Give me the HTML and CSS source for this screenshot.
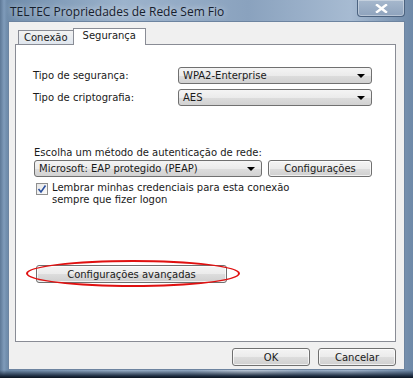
FILE: index.html
```html
<!DOCTYPE html>
<html lang="pt">
<head>
    <meta charset="UTF-8">
    <title>TELTEC Propriedades de Rede Sem Fio</title>
    <link rel="stylesheet" href="styles.css">
</head>
<body>
    <div class="window">
        <!-- Title bar -->
        <div class="titlebar">
            <span class="title">TELTEC Propriedades de Rede Sem Fio</span>
            <span class="close-btn">
                <svg width="13" height="9" viewBox="0 0 13 9">
                    <path d="M2 1 L11 8 M11 1 L2 8" stroke="#fff" stroke-width="2.4" stroke-linecap="square"/>
                </svg>
            </span>
        </div>

        <div class="client">
            <!-- Tabs -->
            <div class="tabs">
                <span class="tab">Conexão</span>
                <span class="tab tab-active">Segurança</span>
            </div>

            <div class="panel">
                <div class="field-row">
                    <span class="field-label">Tipo de segurança:</span>
                    <span class="select select-wide">WPA2-Enterprise<span class="arrow"></span></span>
                </div>
                <div class="field-row">
                    <span class="field-label">Tipo de criptografia:</span>
                    <span class="select select-wide">AES<span class="arrow"></span></span>
                </div>

                <div class="auth-label">Escolha um método de autenticação de rede:</div>
                <div class="auth-row">
                    <span class="select select-auth">Microsoft: EAP protegido (PEAP)<span class="arrow"></span></span>
                    <span class="btn btn-config">Configurações</span>
                </div>

                <div class="check-row">
                    <span class="checkbox">
                        <svg width="10" height="10" viewBox="0 0 10 10">
                            <path d="M1.5 5 L4 8 L8.5 1.5" stroke="#2a4f9e" stroke-width="1.6" fill="none"/>
                        </svg>
                    </span>
                    <span class="check-text">Lembrar minhas credenciais para esta conexão<br>sempre que fizer logon</span>
                </div>

                <div class="advanced">
                    <span class="btn btn-advanced">Configurações avançadas</span>
                </div>
            </div>

            <!-- Dialog buttons -->
            <div class="footer">
                <span class="btn btn-dialog">OK</span>
                <span class="btn btn-dialog">Cancelar</span>
            </div>
        </div>
    </div>
</body>
</html>
```

FILE: styles.css
```css
body {
    margin: 0;
    font-family: 'DejaVu Sans', 'Noto Sans', sans-serif;
    font-size: 10px;
    color: #1a1a1a;
}

.window {
    width: 413px;
    height: 378px;
    box-sizing: border-box;
    padding: 0 8px 8px 8px;
    display: flex;
    flex-direction: column;
    background:
        linear-gradient(to bottom, transparent 0, transparent 370px, #1d2c40 376px, #0b1420 378px),
        radial-gradient(ellipse 60px 30px at 60% 100%, rgba(255, 255, 255, 0.6), transparent),
        linear-gradient(to right, #5d7896 0, #7f9bba 4px, #6f8cab 7px, #9cb3cc 30%, #8aa2be 60%, #a7bbd2 85%, #6e89a8 100%);
}

.titlebar {
    height: 21px;
    display: flex;
    align-items: center;
    justify-content: space-between;
}

.title {
    padding-left: 2px;
    padding-top: 2px;
    font-family: 'Open Sans', 'Noto Sans', sans-serif;
    font-size: 12px;
    color: #16202e;
    text-shadow: 0 0 6px rgba(255, 255, 255, 0.8);
}

.close-btn {
    align-self: flex-start;
    width: 48px;
    height: 17px;
    box-sizing: border-box;
    display: flex;
    align-items: center;
    justify-content: center;
    border: 1px solid #4c6380;
    border-top: none;
    border-radius: 0 0 4px 4px;
    background: linear-gradient(to bottom, #a6b8cd, #8ea3bd);
    box-shadow: inset 0 0 0 1px rgba(255, 255, 255, 0.35);
}

.client {
    flex: 1;
    display: flex;
    flex-direction: column;
    background: #f0f0f0;
    border: 1px solid #6d84a0;
    padding: 6px 8px 0 6px;
}

.tabs {
    display: flex;
    align-items: flex-end;
    padding-left: 3px;
    height: 16px;
}

.tab {
    height: 13px;
    line-height: 14px;
    padding: 0 5px;
    border: 1px solid #898c95;
    border-bottom: none;
    background: linear-gradient(to bottom, #f2f2f2, #dfe6ee);
}

.tab-active {
    height: 16px;
    line-height: 14px;
    padding: 0 9px;
    margin-left: -1px;
    margin-bottom: -1px;
    background: #fff;
    position: relative;
    z-index: 1;
}

.panel {
    height: 298px;
    box-sizing: border-box;
    background: #fff;
    border: 1px solid #898c95;
    padding: 22px 23px 0 17px;
}

.field-row {
    display: flex;
    align-items: center;
    margin-bottom: 5px;
}

.field-label {
    width: 145px;
}

.select {
    height: 17px;
    box-sizing: border-box;
    display: flex;
    align-items: center;
    justify-content: space-between;
    padding: 0 6px 0 4px;
    border: 1px solid #707070;
    border-radius: 3px;
    background: linear-gradient(to bottom, #f4f4f4 0, #ebebeb 50%, #dddddd 51%, #d2d2d2 100%);
}

.select-wide {
    flex: 1;
}

.arrow {
    width: 0;
    height: 0;
    border-left: 4px solid transparent;
    border-right: 4px solid transparent;
    border-top: 4px solid #000;
}

.auth-label {
    margin-top: 40px;
    margin-left: 1px;
    line-height: 13px;
}

.auth-row {
    display: flex;
    gap: 6px;
    margin-top: 1px;
    margin-left: 1px;
}

.select-auth {
    width: 228px;
}

.btn {
    display: flex;
    align-items: center;
    justify-content: center;
    height: 17px;
    box-sizing: border-box;
    border: 1px solid #707070;
    border-radius: 3px;
    background: linear-gradient(to bottom, #f4f4f4 0, #ebebeb 50%, #dddddd 51%, #cfcfcf 100%);
    box-shadow: inset 0 0 0 1px rgba(255, 255, 255, 0.7);
}

.btn-config {
    flex: 1;
}

.check-row {
    display: flex;
    margin-top: 5px;
    margin-left: 3px;
}

.checkbox {
    width: 12px;
    height: 12px;
    box-sizing: border-box;
    border: 1px solid #8f8f8f;
    background: linear-gradient(to bottom right, #e6e6e6, #fbfbfb);
    display: flex;
    align-items: center;
    justify-content: center;
    margin-right: 4px;
    margin-top: 1px;
}

.check-text {
    line-height: 12px;
}

.advanced {
    margin-top: 59px;
    margin-left: 3px;
    width: 191px;
    position: relative;
}

.advanced::after {
    content: '';
    position: absolute;
    left: -10px;
    right: -13px;
    top: -5px;
    bottom: -4px;
    border: 2px solid #e01010;
    border-radius: 50%;
}

.btn-advanced {
    height: 18px;
}

.footer {
    display: flex;
    justify-content: flex-end;
    gap: 8px;
    padding-top: 6px;
}

.btn-dialog {
    width: 78px;
    height: 18px;
}
```
